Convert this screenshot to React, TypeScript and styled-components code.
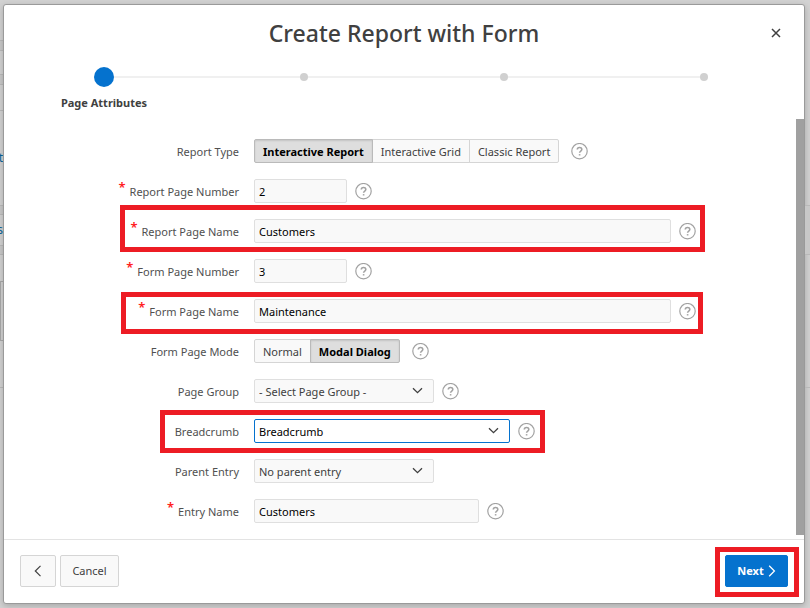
import React, { useState } from "react";
import styled, { createGlobalStyle, css } from "styled-components";

const GlobalStyle = createGlobalStyle`
  * { box-sizing: border-box; }
  body {
    margin: 0;
    background: #d2d2d2;
    color: #404040;
    font-family: "Noto Sans", "Open Sans", sans-serif;
    font-size: 11px;
    line-height: 16px;
  }
  button, input, select { font: inherit; color: inherit; margin: 0; }
`;

const Page = styled.div`
  display: grid;
  grid-template-columns: 3px minmax(0, 1fr) 5px;
  padding: 4px 0;
  min-height: 100vh;
`;

const Edge = styled.div`
  display: flex;
  flex-direction: column;
  overflow: hidden;
  height: 600px;
`;

const Strip = styled.div<{ $h: number; $band?: boolean; $line?: boolean; $box?: boolean }>`
  flex: none;
  width: 100%;
  height: ${(p) => p.$h}px;
  display: flex;
  align-items: center;
  justify-content: flex-end;
  background: ${(p) => (p.$band ? "#c8c8c8" : "transparent")};
  border-top: ${(p) => (p.$line ? "1px solid #b9b9b9" : "0")};
  ${(p) =>
    p.$box &&
    css`
      border: 1px solid #a9a9a9;
      border-right: 0;
    `}
`;

const EdgeLink = styled.a`
  color: #0a6397;
  font-size: 12px;
  text-decoration: none;
`;

const Dialog = styled.main`
  display: flex;
  flex-direction: column;
  min-width: 0;
  background: #fff;
  border: 1px solid #9a9a9a;
  border-radius: 3px;
  box-shadow: 0 2px 6px rgba(0, 0, 0, 0.2);
`;

const Header = styled.header`
  display: grid;
  grid-template-columns: 48px 1fr 48px;
  align-items: center;
  height: 56px;
  padding: 0 4px;
`;

const Title = styled.h1`
  grid-column: 2;
  margin: 0;
  text-align: center;
  font-size: 23px;
  line-height: 32px;
  font-weight: 500;
`;

const CloseButton = styled.button`
  display: grid;
  place-items: center;
  justify-self: center;
  width: 24px;
  height: 24px;
  padding: 0;
  border: 0;
  background: none;
`;

const Steps = styled.ol`
  display: grid;
  grid-template-columns: repeat(4, 1fr);
  height: 58px;
  margin: 0;
  padding: 6px 0 0;
  list-style: none;
`;

const Step = styled.li`
  font-weight: 700;
  text-align: center;
`;

const Track = styled.div`
  display: flex;
  align-items: center;
  height: 20px;
  margin-bottom: 8px;
`;

const TrackLine = styled.span<{ $hidden: boolean }>`
  flex: 1;
  height: 2px;
  background: ${(p) => (p.$hidden ? "transparent" : "#f0f0f0")};
`;

const Dot = styled.span<{ $current: boolean }>`
  width: ${(p) => (p.$current ? 20 : 8)}px;
  height: ${(p) => (p.$current ? 20 : 8)}px;
  border-radius: 50%;
  background: ${(p) => (p.$current ? "#0572ce" : "#d0d0d0")};
`;

const Body = styled.div`
  display: grid;
  grid-template-columns: minmax(0, 1fr) 8px;
  flex: 1;
`;

const Form = styled.form`
  padding: 12px 0 8px;
`;

const ScrollThumb = styled.div`
  height: 416px;
  background: #a0a0a0;
`;

const Row = styled.div`
  position: relative;
  display: grid;
  grid-template-columns: 235px minmax(0, 1fr);
  column-gap: 15px;
  align-items: center;
  height: 40px;
  padding-right: 100px;
`;

const LabelCell = styled.div`
  display: flex;
  justify-content: flex-end;
  align-items: center;
  height: 24px;
  padding-top: 1px;
  color: #505050;
`;

const Required = styled.span`
  align-self: flex-start;
  margin-right: 4px;
  color: #ff2020;
  font-size: 13px;
  font-weight: 600;
  line-height: 14px;
`;

const Field = styled.div<{ $wide?: boolean }>`
  display: flex;
  align-items: center;
  gap: ${(p) => (p.$wide ? 12 : 8)}px;
`;

const control = css`
  height: 24px;
  padding: 1px 4px 0;
  border: 1px solid #dfdfdf;
  border-radius: 2px;
  background: #f9f9f9;
  outline: 0;
`;

const TextInput = styled.input<{ $w?: number }>`
  ${control}
  color: #000;
  min-width: 0;
  ${(p) => (p.$w ? `width: ${p.$w}px;` : "flex: 1;")}
`;

const SelectWrap = styled.div<{ $w: number }>`
  position: relative;
  width: ${(p) => p.$w}px;
  height: 24px;
`;

const Select = styled.select<{ $active?: boolean }>`
  ${control}
  width: 100%;
  appearance: none;
  ${(p) =>
    p.$active &&
    css`
      border-color: #0572ce;
      background: #fff;
      color: #000;
    `}
`;

const SelectArrow = styled.svg`
  position: absolute;
  top: 8px;
  right: 11px;
  pointer-events: none;
`;

const Segments = styled.div`
  display: flex;
`;

const Segment = styled.label<{ $on: boolean }>`
  position: relative;
  height: 24px;
  padding: 4px 8px 0;
  margin-left: -1px;
  border: 1px solid #d5d5d5;
  background: #f9f9f9;
  white-space: nowrap;
  &:first-child { margin-left: 0; border-radius: 2px 0 0 2px; }
  &:last-child { border-radius: 0 2px 2px 0; }
  ${(p) =>
    p.$on &&
    css`
      z-index: 1;
      border-color: #bababa;
      background: #dedede;
      box-shadow: inset 0 1px 2px rgba(0, 0, 0, 0.12);
      color: #000;
      font-weight: 700;
    `}
`;

const HiddenRadio = styled.input`
  position: absolute;
  width: 1px;
  height: 1px;
  margin: 0;
  opacity: 0;
`;

const HelpButton = styled.button`
  flex: none;
  width: 17px;
  height: 17px;
  padding: 0;
  border: 0;
  background: none;
  svg { display: block; }
`;

const Highlight = styled.div<{ $inset: string }>`
  position: absolute;
  inset: ${(p) => p.$inset};
  border: 5px solid #ed1c24;
  pointer-events: none;
`;

const Footer = styled.footer`
  display: flex;
  align-items: center;
  gap: 4px;
  height: 64px;
  padding: 0 16px 2px;
  border-top: 1px solid #e3e3e3;
`;

const Button = styled.button<{ $hot?: boolean; $w: number }>`
  display: flex;
  align-items: center;
  justify-content: center;
  gap: 4px;
  min-width: ${(p) => p.$w}px;
  height: 32px;
  padding: 0 8px;
  border: 1px solid ${(p) => (p.$hot ? "#0572ce" : "#d5d5d5")};
  border-radius: 2px;
  background: ${(p) => (p.$hot ? "#0572ce" : "#f9f9f9")};
  color: ${(p) => (p.$hot ? "#fff" : "#404040")};
  font-weight: ${(p) => (p.$hot ? 700 : 400)};
`;

const NextWrap = styled.div`
  position: relative;
  margin-left: auto;
`;

function Help({ about }: { about: string }) {
  return (
    <HelpButton type="button" aria-label={`Help: ${about}`}>
      <svg width="17" height="17" viewBox="0 0 17 17" fill="none" stroke="#a2a2a2">
        <circle cx="8.5" cy="8.2" r="7.7" strokeWidth="1.2" />
        <path d="M6.3 6.6 C6.3 3.8 10.8 3.8 10.8 6.5 C10.8 8 8.6 8.1 8.6 9.8" strokeWidth="1.6" />
        <path d="M8.6 11.1 V12.5" strokeWidth="1.6" />
      </svg>
    </HelpButton>
  );
}

type RowProps = {
  label: string;
  id?: string;
  required?: boolean;
  wide?: boolean;
  help?: boolean;
  highlight?: string;
  children: React.ReactNode;
};

function FormRow({ label, id, required, wide, help = true, highlight, children }: RowProps) {
  return (
    <Row>
      <LabelCell>
        {required && <Required>*</Required>}
        {id ? <label htmlFor={id}>{label}</label> : <span>{label}</span>}
      </LabelCell>
      <Field $wide={wide}>
        {children}
        {help && <Help about={label} />}
      </Field>
      {highlight && <Highlight $inset={highlight} />}
    </Row>
  );
}

function Choice({ name, options, initial }: { name: string; options: string[]; initial: string }) {
  const [value, setValue] = useState(initial);
  return (
    <Segments role="radiogroup" aria-label={name}>
      {options.map((o) => (
        <Segment key={o} $on={o === value}>
          <HiddenRadio type="radio" name={name} checked={o === value} onChange={() => setValue(o)} />
          {o}
        </Segment>
      ))}
    </Segments>
  );
}

function Dropdown({ id, option, width, active }: { id: string; option: string; width: number; active?: boolean }) {
  return (
    <SelectWrap $w={width}>
      <Select id={id} $active={active}>
        <option>{option}</option>
      </Select>
      <SelectArrow width="11" height="8" viewBox="0 0 11 8" fill="none" stroke="#404040" strokeWidth="1.3">
        <path d="M1 1.2 L5.5 5.7 L10 1.2" />
      </SelectArrow>
    </SelectWrap>
  );
}

const steps = ["Page Attributes", "", "", ""];

export default function App() {
  return (
    <>
      <GlobalStyle />
      <Page>
        <Edge>
          <Strip $h={36} />
          <Strip $h={10} $band $line />
          <Strip $h={24} $line />
          <Strip $h={10} $band $line />
          <Strip $h={26} $line />
          <Strip $h={95} $line><EdgeLink href="#list">t</EdgeLink></Strip>
          <Strip $h={9} $band $line />
          <Strip $h={31} $line><EdgeLink href="#pages">s</EdgeLink></Strip>
          <Strip $h={9} $band $line />
          <Strip $h={27} $line />
          <Strip $h={60} $box />
          <Strip $h={46} />
          <Strip $h={217} $line />
        </Edge>
        <Dialog>
          <Header>
            <Title>Create Report with Form</Title>
            <CloseButton type="button" aria-label="Close">
              <svg width="10" height="10" viewBox="0 0 10 10" stroke="#404040" strokeWidth="1.5">
                <path d="M1 1 L9 9 M9 1 L1 9" />
              </svg>
            </CloseButton>
          </Header>
          <Steps>
            {steps.map((s, i) => (
              <Step key={i} aria-current={i === 0 ? "step" : undefined}>
                <Track>
                  <TrackLine $hidden={i === 0} />
                  <Dot $current={i === 0} />
                  <TrackLine $hidden={i === steps.length - 1} />
                </Track>
                {s}
              </Step>
            ))}
          </Steps>
          <Body>
            <Form onSubmit={(e) => e.preventDefault()}>
              <FormRow label="Report Type" wide>
                <Choice
                  name="Report Type"
                  options={["Interactive Report", "Interactive Grid", "Classic Report"]}
                  initial="Interactive Report"
                />
              </FormRow>
              <FormRow label="Report Page Number" id="rpn" required>
                <TextInput id="rpn" $w={93} defaultValue="2" />
              </FormRow>
              <FormRow label="Report Page Name" id="rpname" required highlight="-6px 91px -1px 116px">
                <TextInput id="rpname" defaultValue="Customers" />
              </FormRow>
              <FormRow label="Form Page Number" id="fpn" required>
                <TextInput id="fpn" $w={93} defaultValue="3" />
              </FormRow>
              <FormRow label="Form Page Name" id="fpname" required highlight="1px 93px -3px 117px">
                <TextInput id="fpname" defaultValue="Maintenance" />
              </FormRow>
              <FormRow label="Form Page Mode" wide>
                <Choice name="Form Page Mode" options={["Normal", "Modal Dialog"]} initial="Modal Dialog" />
              </FormRow>
              <FormRow label="Page Group" id="group">
                <Dropdown id="group" option="- Select Page Group -" width={180} />
              </FormRow>
              <FormRow label="Breadcrumb" id="crumb" highlight="-1px 251px -2px 156px">
                <Dropdown id="crumb" option="Breadcrumb" width={256} active />
              </FormRow>
              <FormRow label="Parent Entry" id="parent" help={false}>
                <Dropdown id="parent" option="No parent entry" width={180} />
              </FormRow>
              <FormRow label="Entry Name" id="entry" required>
                <TextInput id="entry" $w={225} defaultValue="Customers" />
              </FormRow>
            </Form>
            <ScrollThumb />
          </Body>
          <Footer>
            <Button type="button" $w={36} aria-label="Previous">
              <svg width="12" height="12" viewBox="0 0 12 12" fill="none" stroke="#404040" strokeWidth="1.2">
                <path d="M8.5 0.8 L3.3 6 L8.5 11.2" />
              </svg>
            </Button>
            <Button type="button" $w={59}>Cancel</Button>
            <NextWrap>
              <Button type="button" $hot $w={63}>
                Next
                <svg width="8" height="12" viewBox="0 0 8 12" fill="none" stroke="#fff" strokeWidth="1.3">
                  <path d="M1.2 0.8 L6.4 6 L1.2 11.2" />
                </svg>
              </Button>
              <Highlight $inset="-8px -11px -10px -10px" />
            </NextWrap>
          </Footer>
        </Dialog>
        <Edge>
          <Strip $h={201} />
          <Strip $h={49} $band $line />
          <Strip $h={133} $line />
          <Strip $h={217} $line />
        </Edge>
      </Page>
    </>
  );
}
